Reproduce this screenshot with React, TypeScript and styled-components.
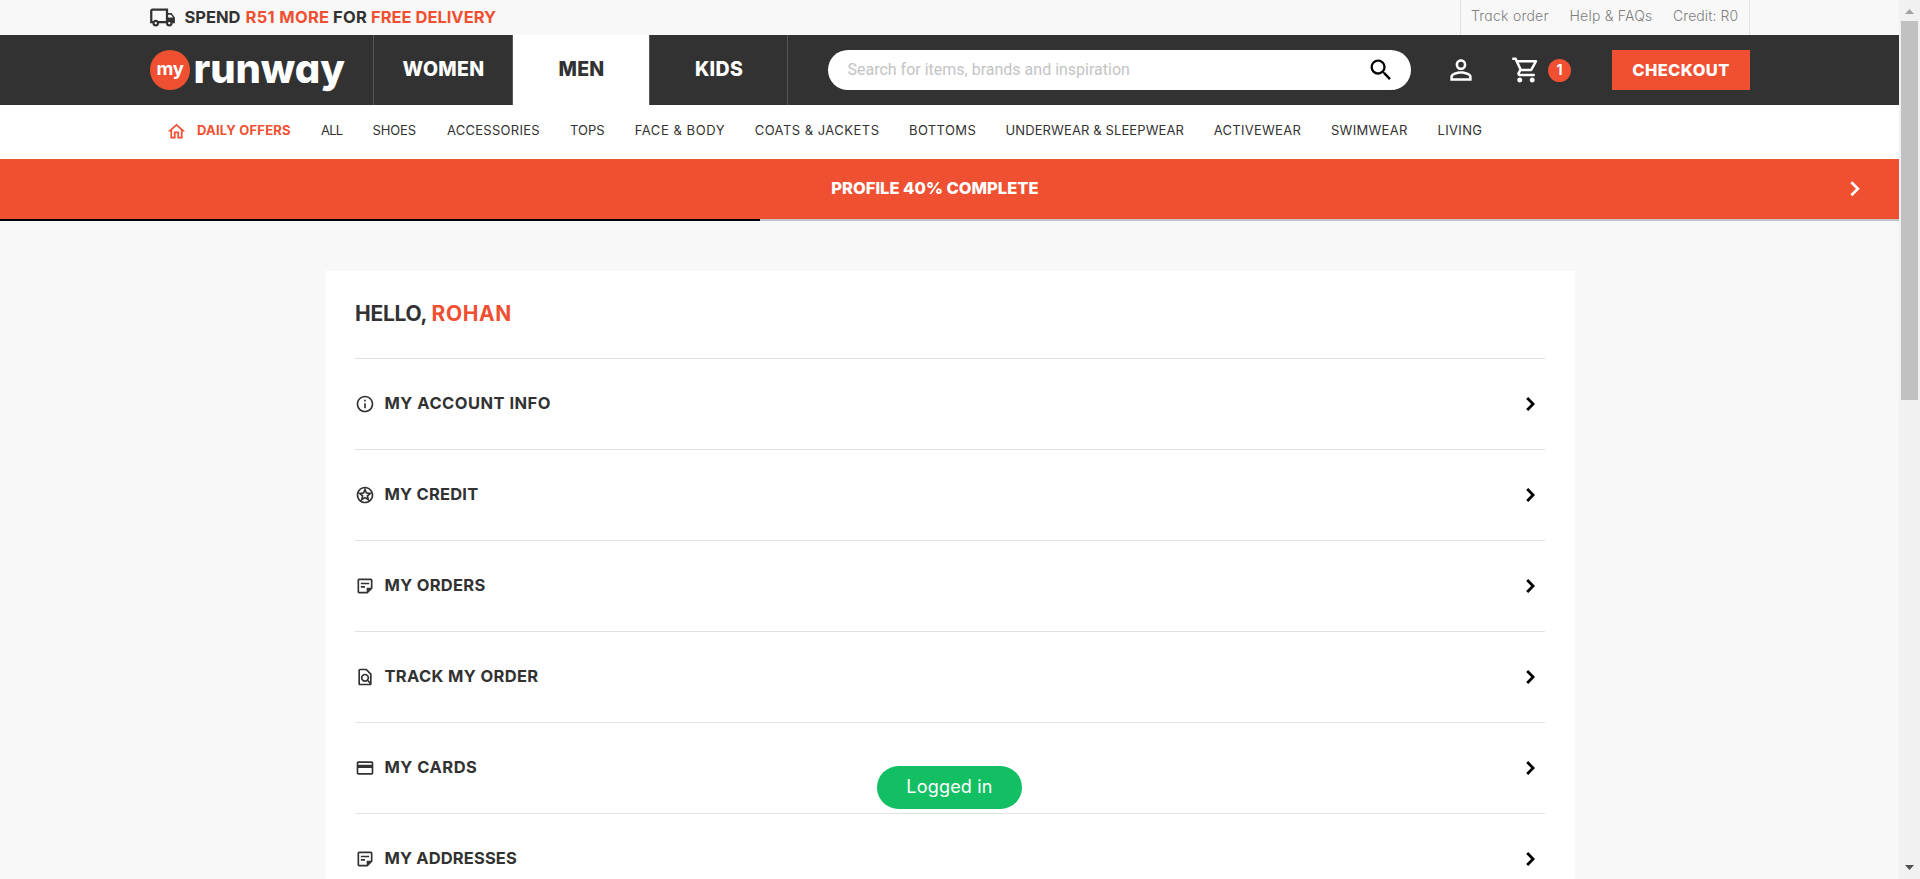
import React from 'react';
import styled, { createGlobalStyle } from 'styled-components';
import {
  MdOutlineLocalShipping,
  MdPersonOutline,
  MdOutlineShoppingCart,
  MdSearch,
  MdInfoOutline,
  MdOutlineStars,
  MdOutlineStickyNote2,
  MdOutlineFindInPage,
  MdCreditCard,
  MdOutlineHome,
} from 'react-icons/md';
import type { IconType } from 'react-icons';

const ORANGE = '#f05032';
const DARK = '#323232';

const GlobalStyle = createGlobalStyle`
  *, *::before, *::after { box-sizing: border-box; }
  body {
    margin: 0;
    overflow: hidden;
    background: #f8f8f8;
    color: ${DARK};
    font-family: Inter, sans-serif;
    font-feature-settings: "cv11";
  }
`;

const Window = styled.div`
  display: flex;
  height: 879px;
  overflow: hidden;
`;

const Page = styled.div`
  flex: 1;
  min-width: 0;
  display: flex;
  flex-direction: column;
  overflow: hidden;
`;

const Label = styled.span<{ $track?: number; $slot?: number; $accent?: boolean }>`
  display: block;
  flex: none;
  white-space: nowrap;
  letter-spacing: ${(p) => p.$track ?? 0}px;
  width: ${(p) => (p.$slot ? `${p.$slot}px` : 'auto')};
  color: ${(p) => (p.$accent ? ORANGE : 'inherit')};
`;

/* Top bar */
const TopBar = styled.div`
  flex: none;
  height: 35px;
  padding: 0 149px;
  display: flex;
  justify-content: space-between;
`;

const Delivery = styled.div`
  display: flex;
  font-size: 16.5px;
  font-weight: 700;
  line-height: 34px;

  svg {
    width: 27px;
    height: 27px;
    margin: 4px 8.5px 0 0;
  }
`;

const TopLinks = styled.div`
  display: flex;
  width: 290px;
  padding-left: 10px;
  border: solid #e2e2e2;
  border-width: 0 1px;
  color: #808080;
  font-size: 14px;
  font-weight: 300;
  line-height: 32px;
`;

/* Main header */
const Header = styled.header`
  flex: none;
  height: 70px;
  padding: 0 149px 0 150px;
  display: flex;
  align-items: center;
  background: ${DARK};
  color: #fff;
`;

const Logo = styled.div`
  display: flex;
  align-items: center;
  width: 223px;
`;

const LogoDisc = styled.div`
  width: 40px;
  height: 40px;
  border-radius: 50%;
  background: ${ORANGE};
  font-size: 18.5px;
  font-weight: 700;
  line-height: 37px;
  letter-spacing: -0.4px;
  text-align: center;
`;

const LogoWord = styled.div`
  padding: 0 0 3px 3.5px;
  font-size: 40px;
  font-weight: 800;
  line-height: 40px;
  letter-spacing: -0.1px;
`;

const Tabs = styled.div`
  display: flex;
  height: 70px;
  border-left: 1px solid #575757;
`;

const Tab = styled.div<{ $width: number; $active?: boolean }>`
  width: ${(p) => p.$width}px;
  border-right: 1px solid #575757;
  background: ${(p) => (p.$active ? '#fff' : 'transparent')};
  color: ${(p) => (p.$active ? DARK : '#fff')};
  font-size: 19.5px;
  font-weight: 800;
  line-height: 68px;
  letter-spacing: 0.3px;
  text-indent: 1px;
  text-align: center;
`;

const SearchBox = styled.div`
  display: flex;
  align-items: center;
  justify-content: space-between;
  width: 583px;
  height: 40px;
  margin-left: 40px;
  padding: 0 16.5px 0 19.5px;
  border-radius: 20px;
  background: #fff;
  color: #c4c4c4;
  font: 400 16px/38px Roboto, sans-serif;

  svg {
    width: 28px;
    height: 28px;
    color: #000;
  }
`;

const Account = styled.div`
  margin-left: 34px;
  svg {
    display: block;
    width: 32px;
    height: 32px;
  }
`;

const Cart = styled.div`
  display: flex;
  align-items: center;
  gap: 7px;
  margin-left: 34px;
  svg {
    width: 30px;
    height: 30px;
  }
`;

const CartCount = styled.div`
  width: 23px;
  height: 23px;
  border-radius: 50%;
  background: ${ORANGE};
  font-size: 14px;
  font-weight: 700;
  line-height: 22px;
  text-align: center;
`;

const Checkout = styled.div`
  width: 138px;
  height: 40px;
  margin-left: auto;
  background: ${ORANGE};
  font-size: 16.5px;
  font-weight: 800;
  line-height: 40px;
  letter-spacing: 0.4px;
  text-align: center;
`;

/* Category navigation */
const Nav = styled.nav`
  flex: none;
  display: flex;
  height: 54px;
  padding-left: 165.5px;
  background: #fff;
  font-size: 13px;
  line-height: 51px;
`;

const DailyOffers = styled.div`
  display: flex;
  width: 155.5px;
  color: ${ORANGE};
  font-weight: 700;

  svg {
    width: 21px;
    height: 21px;
    margin: 16px 10.5px 0 0;
  }
`;

/* Profile banner */
const Banner = styled.div`
  flex: none;
  display: flex;
  align-items: center;
  justify-content: space-between;
  height: 60px;
  padding: 0 39px 0 831.3px;
  background: ${ORANGE};
  color: #fff;
  font-size: 16.5px;
  font-weight: 800;
  line-height: 58px;
`;

const BannerText = styled.div`
  height: 60px;
`;

const ProgressTrack = styled.div`
  flex: none;
  height: 2px;
  background: #c4c4c4;
`;

const ProgressFill = styled.div`
  width: 40%;
  height: 2px;
  background: #000;
`;

/* Account card */
const Card = styled.main`
  flex: none;
  width: 1250px;
  margin: 50px 0 0 325px;
  padding: 0 30px;
  background: #fff;
`;

const Greeting = styled.div`
  display: flex;
  height: 87px;
  font-size: 21px;
  font-weight: 700;
  line-height: 85px;
`;

const Row = styled.div`
  display: flex;
  align-items: center;
  height: 91px;
  border-top: 1px solid #e2e2e2;
  font-size: 16.5px;
  font-weight: 700;

  > svg:first-child {
    width: 20px;
    height: 20px;
  }
`;

const RowTitle = styled.div`
  flex: 1;
  padding: 0 0 2px 9.5px;
  line-height: 24px;
`;

const RowArrow = styled.div`
  display: flex;
  width: 19px;
  color: #000;
`;

/* Toast floating over the page */
const Toast = styled.div`
  position: absolute;
  left: 877px;
  top: 766px;
  width: 145px;
  height: 43px;
  border-radius: 21.5px;
  background: #12bf62;
  color: #fff;
  font-size: 18px;
  line-height: 42px;
  letter-spacing: 0.19px;
  text-align: center;
`;

/* Window scrollbar */
const Scrollbar = styled.div`
  flex: none;
  display: flex;
  flex-direction: column;
  align-items: center;
  width: 21px;
  padding: 9px 0 9px;
  background: #f1f1f1;
`;

const Thumb = styled.div`
  width: 17px;
  height: 379px;
  margin: 7px 0 auto;
  background: #c1c1c1;
`;

const Chevron = ({ width, height, weight }: { width: number; height: number; weight: number }) => (
  <svg width={width} height={height} viewBox="0 0 9 14" fill="none">
    <path d="M1.2 1.1 7.1 7 1.2 12.9" stroke="currentColor" strokeWidth={weight} />
  </svg>
);

const categories: [string, number, number][] = [
  ['ALL', 51.5, -0.8],
  ['SHOES', 74.5, -0.11],
  ['ACCESSORIES', 123, 0.26],
  ['TOPS', 64.7, 0.02],
  ['FACE & BODY', 120, 0.56],
  ['COATS & JACKETS', 154.3, 0.47],
  ['BOTTOMS', 96.5, 0.39],
  ['UNDERWEAR & SLEEPWEAR', 208.2, 0.11],
  ['ACTIVEWEAR', 117.3, 0.27],
  ['SWIMWEAR', 106.6, 0.29],
  ['LIVING', 44, 0.32],
];

const rows: [string, number, IconType][] = [
  ['MY ACCOUNT INFO', 0.48, MdInfoOutline],
  ['MY CREDIT', 0.21, MdOutlineStars],
  ['MY ORDERS', 0.29, MdOutlineStickyNote2],
  ['TRACK MY ORDER', 0.35, MdOutlineFindInPage],
  ['MY CARDS', 0.48, MdCreditCard],
  ['MY ADDRESSES', 0.14, MdOutlineStickyNote2],
];

export default function App() {
  return (
    <>
      <GlobalStyle />
      <Window>
        <Page>
          <TopBar>
            <Delivery>
              <MdOutlineLocalShipping />
              <Label $slot={61}>SPEND</Label>
              <Label $slot={87.5} $track={0.32} $accent>R51 MORE</Label>
              <Label $slot={38} $track={0.3}>FOR</Label>
              <Label $accent>FREE DELIVERY</Label>
            </Delivery>
            <TopLinks>
              <Label $slot={98.5} $track={0.23}>Track order</Label>
              <Label $slot={103.5} $track={0.22}>Help &amp; FAQs</Label>
              <Label $track={0.08}>Credit: R0</Label>
            </TopLinks>
          </TopBar>

          <Header>
            <Logo>
              <LogoDisc>my</LogoDisc>
              <LogoWord>runway</LogoWord>
            </Logo>
            <Tabs>
              <Tab $width={139}>WOMEN</Tab>
              <Tab $width={137} $active>MEN</Tab>
              <Tab $width={138}>KIDS</Tab>
            </Tabs>
            <SearchBox>
              Search for items, brands and inspiration
              <MdSearch />
            </SearchBox>
            <Account>
              <MdPersonOutline />
            </Account>
            <Cart>
              <MdOutlineShoppingCart />
              <CartCount>1</CartCount>
            </Cart>
            <Checkout>CHECKOUT</Checkout>
          </Header>

          <Nav>
            <DailyOffers>
              <MdOutlineHome />
              <Label $track={0.21}>DAILY OFFERS</Label>
            </DailyOffers>
            {categories.map(([name, slot, track]) => (
              <Label key={name} $slot={slot} $track={track}>{name}</Label>
            ))}
          </Nav>

          <Banner>
            <BannerText>PROFILE 40% COMPLETE</BannerText>
            <Chevron width={10} height={15.5} weight={2.4} />
          </Banner>
          <ProgressTrack>
            <ProgressFill />
          </ProgressTrack>

          <Card>
            <Greeting>
              <Label $slot={76.5} $track={-0.27}>HELLO,</Label>
              <Label $track={0.6} $accent>ROHAN</Label>
            </Greeting>
            {rows.map(([title, track, Icon]) => (
              <Row key={title}>
                <Icon />
                <RowTitle>
                  <Label $track={track}>{title}</Label>
                </RowTitle>
                <RowArrow>
                  <Chevron width={9} height={14} weight={2.8} />
                </RowArrow>
              </Row>
            ))}
          </Card>
        </Page>

        <Scrollbar>
          <svg width="9" height="5" viewBox="0 0 9 5">
            <path d="M4.5 0 9 5H0z" fill="#a3a3a3" />
          </svg>
          <Thumb />
          <svg width="9" height="5" viewBox="0 0 9 5">
            <path d="M0 0h9L4.5 5z" fill="#505050" />
          </svg>
        </Scrollbar>
      </Window>
      <Toast>Logged in</Toast>
    </>
  );
}
